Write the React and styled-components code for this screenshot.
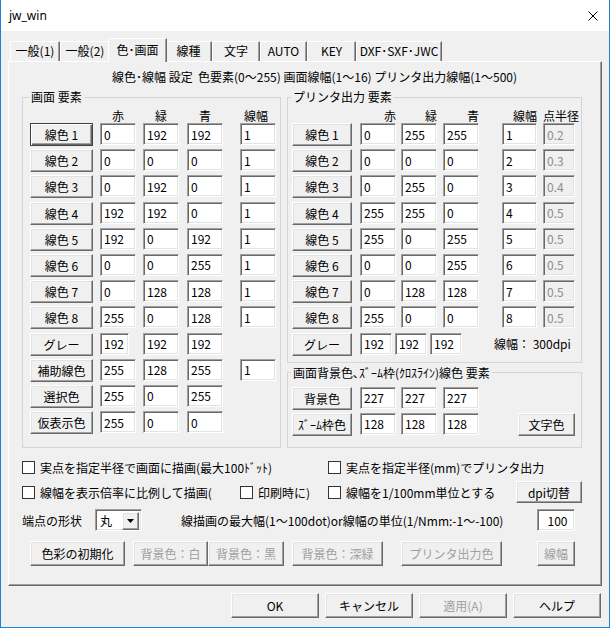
import React from "react";
import styled, { createGlobalStyle, css } from "styled-components";

const FONT = `"Noto Sans CJK JP", "Noto Sans", sans-serif`;

const Global = createGlobalStyle`
  html, body { margin: 0; padding: 0; background: #f0f0f0; }
  body { font-family: ${FONT}; font-size: 12px; color: #000; }
  * { box-sizing: border-box; }
`;

const Window = styled.div`
  width: 610px;
  height: 628px;
  border: 1px solid #1883d7;
  border-top: none;
  background: #f0f0f0;
  display: flex;
  flex-direction: column;
  overflow: hidden;
`;

const TitleBar = styled.div`
  height: 31px;
  flex: none;
  background: #fff;
  display: flex;
  align-items: center;
  justify-content: space-between;
  padding: 0 11px 0 8px;
  font-family: "Noto Sans", "Open Sans", sans-serif;
  font-size: 12px;
`;

const Body = styled.div`
  flex: 1;
  display: flex;
  flex-direction: column;
  padding: 7px 7px 0 7px;
`;

const TabStrip = styled.div`
  display: flex;
  align-items: flex-end;
  height: 23px;
  padding-left: 2px;
`;

const Tab = styled.div`
  width: ${(p) => p.$w}px;
  height: 20px;
  line-height: 18px;
  text-align: center;
  white-space: nowrap;
  background: #f0f0f0;
  border: 1px solid;
  border-color: #fff #696969 transparent #fff;
  border-bottom: none;
  box-shadow: inset -1px 0 0 #a0a0a0;
  ${(p) =>
    p.$active &&
    css`
      height: 24px;
      line-height: 21px;
      margin: 0 -2px -1px -2px;
      position: relative;
      z-index: 1;
    `}
`;

const Panel = styled.div`
  width: 594px;
  height: 525px;
  border: 1px solid;
  border-color: #fff #696969 #696969 #fff;
  box-shadow: inset -1px -1px 0 #a0a0a0;
  padding: 0 0 0 13px;
  display: flex;
  flex-direction: column;
`;

const HeaderText = styled.div`
  margin: 7px 0 0 90px;
  line-height: 16px;
  white-space: nowrap;
`;

const GroupsRow = styled.div`
  display: flex;
  gap: 6px;
  margin-top: 4px;
  align-items: flex-start;
`;

const Column = styled.div`
  display: flex;
  flex-direction: column;
  gap: 2px;
`;

const Group = styled.fieldset`
  margin: 0;
  width: ${(p) => p.$w}px;
  min-width: 0;
  border: 1px solid #d5d5d5;
  padding: ${(p) => p.$pad};
`;

const Legend = styled.legend`
  padding: 0 2px;
  margin-left: -1px;
  line-height: 16px;
  white-space: nowrap;
`;

const Grid = styled.div`
  display: grid;
  grid-template-columns: ${(p) => p.$cols};
  grid-auto-rows: 23px;
  row-gap: ${(p) => p.$gap ?? 3.2}px;
  align-items: start;
`;

const HeadGrid = styled.div`
  display: grid;
  grid-template-columns: ${(p) => p.$cols};
  height: 14px;
  line-height: 14px;
`;

const HeadLabel = styled.div`
  grid-column: ${(p) => p.$col};
  width: ${(p) => p.$w}px;
  text-align: ${(p) => p.$align};
  white-space: nowrap;
`;

const bevelRaised = css`
  background: #f0f0f0;
  border: 1px solid;
  border-color: #fff #696969 #696969 #fff;
  box-shadow: inset -1px -1px 0 #a0a0a0, inset 1px 1px 0 #e3e3e3;
`;

const Btn = styled.button`
  ${bevelRaised}
  width: ${(p) => p.$w}px;
  height: ${(p) => p.$h ?? 23}px;
  margin-left: ${(p) => p.$ml ?? 0}px;
  padding: 0;
  font-family: ${FONT};
  font-size: 12px;
  color: ${(p) => (p.disabled ? "#a0a0a0" : "#000")};
  white-space: nowrap;
  grid-column: ${(p) => p.$col ?? "auto"};
  justify-self: ${(p) => p.$justify ?? "start"};
  ${(p) =>
    p.$default &&
    css`
      border-color: #404040;
      box-shadow: inset 1px 1px 0 #fff, inset -1px -1px 0 #696969,
        inset -2px -2px 0 #a0a0a0;
    `}
`;

const Field = styled.input`
  width: ${(p) => p.$w ?? 36}px;
  height: 22px;
  margin: 0;
  margin-left: ${(p) => p.$ml ?? 0}px;
  padding: 0 0 0 3px;
  font-family: ${FONT};
  font-size: 12px;
  color: ${(p) => (p.disabled ? "#8d8d8d" : "#000")};
  background: ${(p) => (p.disabled ? "#f0f0f0" : "#fff")};
  border: 1px solid;
  border-color: #a0a0a0 #fff #fff #a0a0a0;
  box-shadow: inset 1px 1px 0 #696969, inset -1px -1px 0 #e3e3e3;
  outline: none;
  text-align: ${(p) => p.$align ?? "left"};
`;

const SpanCell = styled.div`
  grid-column: ${(p) => p.$col};
  display: flex;
  align-items: center;
  gap: 3px;
  height: 22px;
`;

const Note = styled.span`
  margin-left: ${(p) => p.$ml}px;
  white-space: nowrap;
`;

const OptRow = styled.div`
  display: flex;
  align-items: center;
  height: ${(p) => p.$h}px;
  margin-top: ${(p) => p.$mt}px;
`;

const Check = styled.label`
  display: flex;
  align-items: center;
  gap: 5px;
  width: ${(p) => p.$w}px;
  white-space: nowrap;
`;

const Box = styled.span`
  width: 13px;
  height: 13px;
  flex: none;
  background: #fff;
  border: 1px solid #333;
`;

const Text = styled.span`
  width: ${(p) => p.$w}px;
  padding-left: ${(p) => p.$pl ?? 0}px;
  white-space: nowrap;
  flex: none;
`;

const Combo = styled.div`
  width: 47px;
  height: 22px;
  display: flex;
  background: #fff;
  border: 1px solid;
  border-color: #a0a0a0 #fff #fff #a0a0a0;
  box-shadow: inset 1px 1px 0 #696969, inset -1px -1px 0 #e3e3e3;
  padding: 2px 2px 2px 0;
`;

const ComboText = styled.span`
  flex: 1;
  line-height: 18px;
  padding-left: 4px;
`;

const ComboBtn = styled.span`
  ${bevelRaised}
  width: 17px;
  height: 18px;
  display: flex;
  align-items: center;
  justify-content: center;
`;

const BottomBar = styled.div`
  display: flex;
  justify-content: flex-end;
  gap: 6px;
  margin-top: 7px;
  padding-right: 1px;
`;

const LEFT_COLS = "70px 43px 44px 53px 36px";
const RIGHT_COLS = "68px 41px 42px 59px 41px 32px";

const leftRows = [
  { label: "線色 1", v: ["0", "192", "192", "1"], def: true },
  { label: "線色 2", v: ["0", "0", "0", "1"] },
  { label: "線色 3", v: ["0", "192", "0", "1"] },
  { label: "線色 4", v: ["192", "192", "0", "1"] },
  { label: "線色 5", v: ["192", "0", "192", "1"] },
  { label: "線色 6", v: ["0", "0", "255", "1"] },
  { label: "線色 7", v: ["0", "128", "128", "1"] },
  { label: "線色 8", v: ["255", "0", "128", "1"] },
  { label: "グレー", v: ["192", "192", "192"], narrow: true },
  { label: "補助線色", v: ["255", "128", "255", "1"] },
  { label: "選択色", v: ["255", "0", "255"] },
  { label: "仮表示色", v: ["255", "0", "0"] },
];

const rightRows = [
  ["0", "255", "255", "1", "0.2"],
  ["0", "0", "0", "2", "0.3"],
  ["0", "255", "0", "3", "0.4"],
  ["255", "255", "0", "4", "0.5"],
  ["255", "0", "255", "5", "0.5"],
  ["0", "0", "255", "6", "0.5"],
  ["0", "128", "128", "7", "0.5"],
  ["255", "0", "0", "8", "0.5"],
];

const tabs = [
  ["一般(1)", 50],
  ["一般(2)", 50],
  ["色･画面", 59, true],
  ["線種", 47],
  ["文字", 48],
  ["AUTO", 47],
  ["KEY", 49],
  ["DXF･SXF･JWC", 86],
];

const CloseIcon = () => (
  <svg width="10" height="10" viewBox="0 0 10 10">
    <path d="M0.5 0.5L9.5 9.5M9.5 0.5L0.5 9.5" stroke="#000" strokeWidth="1" />
  </svg>
);

export default function App() {
  return (
    <Window>
      <Global />
      <TitleBar>
        <span>jw_win</span>
        <CloseIcon />
      </TitleBar>
      <Body>
        <TabStrip>
          {tabs.map(([t, w, a]) => (
            <Tab key={t} $w={w} $active={a}>
              {t}
            </Tab>
          ))}
        </TabStrip>
        <Panel>
          <HeaderText>
            線色･線幅 設定&nbsp;&nbsp;色要素(0〜255) 画面線幅(1〜16) プリンタ出力線幅(1〜500)
          </HeaderText>
          <GroupsRow>
            <Group $w={259} $pad="4px 0 13px 7px">
              <Legend>画面 要素</Legend>
              <HeadGrid $cols={LEFT_COLS}>
                <HeadLabel $col={2} $w={36} $align="center">赤</HeadLabel>
                <HeadLabel $col={3} $w={36} $align="center">緑</HeadLabel>
                <HeadLabel $col={4} $w={36} $align="center">青</HeadLabel>
                <HeadLabel $col={5} $w={32} $align="center">線幅</HeadLabel>
              </HeadGrid>
              <Grid $cols={LEFT_COLS}>
                {leftRows.map((r) => (
                  <React.Fragment key={r.label}>
                    <Btn $w={63} $default={r.def}>{r.label}</Btn>
                    {r.v.map((x, i) => (
                      <Field
                        key={i}
                        readOnly
                        value={x}
                        $w={r.narrow && i === 0 ? 29 : 36}
                      />
                    ))}
                    {r.v.length === 3 && <span />}
                  </React.Fragment>
                ))}
              </Grid>
            </Group>
            <Column>
              <Group $w={295} $pad="4px 0 6px 4px">
                <Legend>プリンタ出力 要素</Legend>
                <HeadGrid $cols={RIGHT_COLS}>
                  <HeadLabel $col={2} $w={36} $align="right">赤</HeadLabel>
                  <HeadLabel $col={3} $w={36} $align="right">緑</HeadLabel>
                  <HeadLabel $col={4} $w={36} $align="right">青</HeadLabel>
                  <HeadLabel $col={5} $w={35} $align="right">線幅</HeadLabel>
                  <HeadLabel $col={6} $w={34} $align="left">点半径</HeadLabel>
                </HeadGrid>
                <Grid $cols={RIGHT_COLS}>
                  {rightRows.map((v, n) => (
                    <React.Fragment key={n}>
                      <Btn $w={60}>線色 {n + 1}</Btn>
                      <Field readOnly value={v[0]} />
                      <Field readOnly value={v[1]} />
                      <Field readOnly value={v[2]} />
                      <Field readOnly value={v[3]} $w={35} />
                      <Field disabled value={v[4]} $w={32} />
                    </React.Fragment>
                  ))}
                  <Btn $w={60}>グレー</Btn>
                  <SpanCell $col="2 / span 5">
                    <Field readOnly value="192" $w={32} />
                    <Field readOnly value="192" $w={32} />
                    <Field readOnly value="192" $w={32} />
                    <Note $ml={29}>線幅： 300dpi</Note>
                  </SpanCell>
                </Grid>
              </Group>
              <Group $w={295} $pad="6px 0 11px 4px">
                <Legend>画面背景色､ｽﾞｰﾑ枠(ｸﾛｽﾗｲﾝ)線色 要素</Legend>
                <Grid $cols={RIGHT_COLS} $gap={3}>
                  <Btn $w={60}>背景色</Btn>
                  <Field readOnly value="227" />
                  <Field readOnly value="227" />
                  <Field readOnly value="227" />
                  <span />
                  <span />
                  <Btn $w={60}>ｽﾞｰﾑ枠色</Btn>
                  <Field readOnly value="128" />
                  <Field readOnly value="128" />
                  <Field readOnly value="128" />
                  <Btn $w={57} $col="5 / span 2" $justify="end">
                    文字色
                  </Btn>
                </Grid>
              </Group>
            </Column>
          </GroupsRow>

          <OptRow $h={16} $mt={11}>
            <Check $w={306}>
              <Box />
              実点を指定半径で画面に描画(最大100ﾄﾞｯﾄ)
            </Check>
            <Check $w={250}>
              <Box />
              実点を指定半径(mm)でプリンタ出力
            </Check>
          </OptRow>
          <OptRow $h={22} $mt={6}>
            <Check $w={218}>
              <Box />
              線幅を表示倍率に比例して描画(
            </Check>
            <Check $w={88}>
              <Box />
              印刷時に)
            </Check>
            <Check $w={188}>
              <Box />
              線幅を1/100mm単位とする
            </Check>
            <Btn $w={66} $h={22}>dpi切替</Btn>
          </OptRow>
          <OptRow $h={22} $mt={6}>
            <Text $w={73}>端点の形状</Text>
            <Combo>
              <ComboText>丸</ComboText>
              <ComboBtn>
                <svg width="7" height="4" viewBox="0 0 7 4">
                  <path d="M0 0H7L3.5 4Z" fill="#000" />
                </svg>
              </ComboBtn>
            </Combo>
            <Text $w={395} $pl={39}>
              線描画の最大幅(1〜100dot)or線幅の単位(1/Nmm:-1〜-100)
            </Text>
            <Field readOnly value="100" $w={38} $align="center" />
          </OptRow>
          <OptRow $h={25} $mt={10}>
            <Btn $w={95} $h={25} $ml={8}>色彩の初期化</Btn>
            <Btn $w={75} $h={25} $ml={8} disabled>背景色：白</Btn>
            <Btn $w={76} $h={25} disabled>背景色：黒</Btn>
            <Btn $w={91} $h={25} $ml={8} disabled>背景色：深緑</Btn>
            <Btn $w={101} $h={25} $ml={18} disabled>プリンタ出力色</Btn>
            <Btn $w={38} $h={25} $ml={35} disabled>線幅</Btn>
          </OptRow>
        </Panel>
        <BottomBar>
          <Btn $w={88} $h={25}>OK</Btn>
          <Btn $w={88} $h={25}>キャンセル</Btn>
          <Btn $w={88} $h={25} disabled>適用(A)</Btn>
          <Btn $w={88} $h={25}>ヘルプ</Btn>
        </BottomBar>
      </Body>
    </Window>
  );
}
